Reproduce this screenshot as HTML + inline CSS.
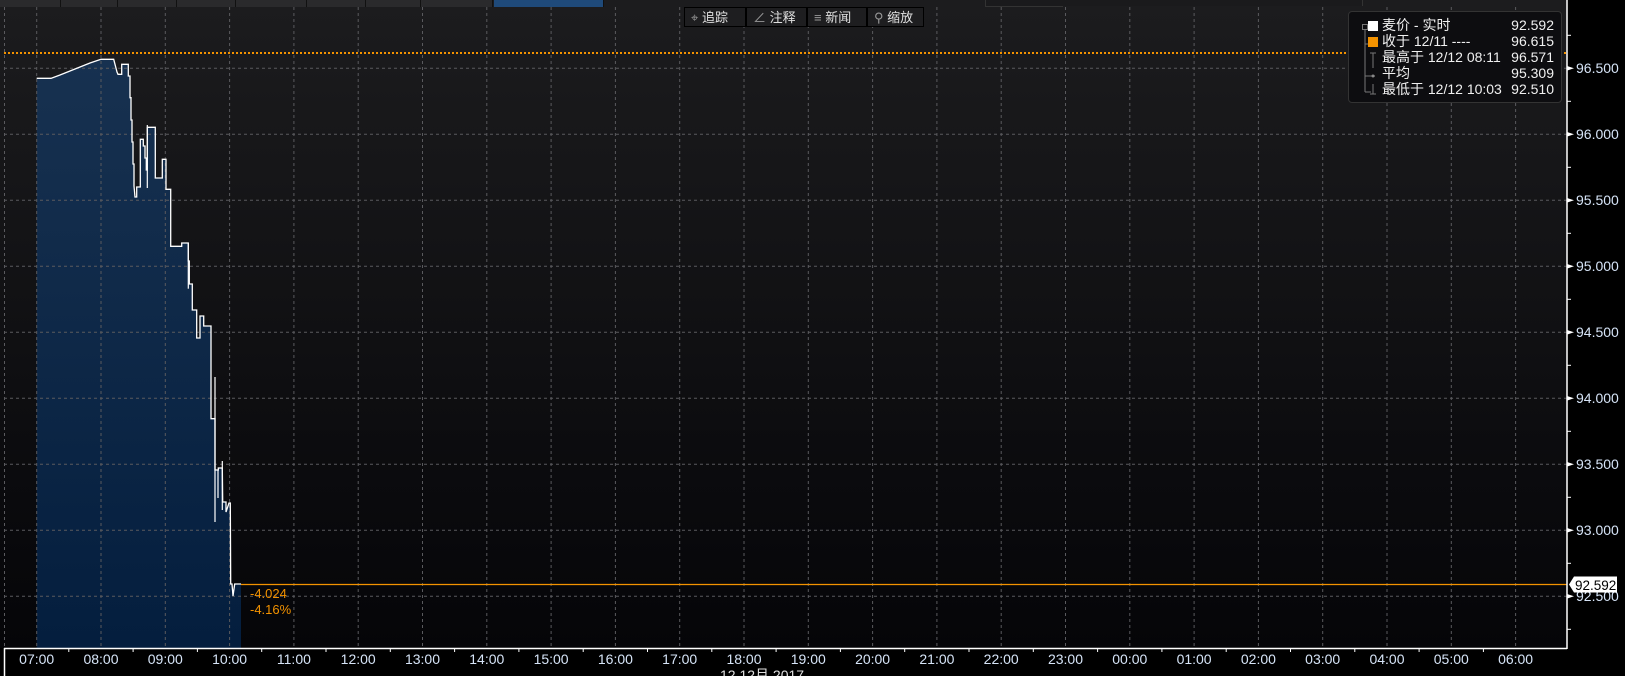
<!DOCTYPE html>
<html><head><meta charset="utf-8"><style>
html,body{margin:0;padding:0;background:#000;}
body{width:1625px;height:676px;overflow:hidden;position:relative;font-family:"Liberation Sans","Noto Sans CJK SC",sans-serif;}
svg{position:absolute;left:0;top:0;}
.tb{position:absolute;top:7px;height:20px;background:#1e1e20;border:1px solid #000;color:#e0e0e0;font-size:13px;line-height:20px;box-sizing:border-box;}
.tab{position:absolute;top:0;height:7px;background:#2a2a2c;border-right:1px solid #111;}
.lg{position:absolute;left:1348px;top:11px;width:214px;height:92px;background:#0d0d10;border:1px solid #333;border-radius:4px;box-sizing:border-box;color:#f0f0f0;font-size:14px;}
.row{position:absolute;left:22px;right:7px;height:16px;line-height:16px;}
.row span.v{position:absolute;right:0;}
</style></head><body>
<svg width="1625" height="676" xmlns="http://www.w3.org/2000/svg" font-family="Liberation Sans, sans-serif">
<defs>
<linearGradient id="bg" x1="0" y1="0" x2="0" y2="1"><stop offset="0" stop-color="#1c1c1e"/><stop offset="1" stop-color="#050508"/></linearGradient>
<linearGradient id="fl" x1="0" y1="0" x2="0" y2="1"><stop offset="0" stop-color="#173150"/><stop offset="1" stop-color="#041e3e"/></linearGradient>
</defs>
<rect x="0" y="0" width="1567" height="648" fill="url(#bg)"/>
<rect x="1567" y="0" width="58" height="676" fill="#000"/>
<rect x="0" y="648" width="1567" height="28" fill="#000"/>
<polygon fill="url(#fl)" points="36.7,648 36.7,78.3 51,78.3 60,75 70,71 80,67 90,63 101,59.3 113.7,59.3 117,72 118,74.3 121.7,74.3 121.7,64.3 128.3,64.3 128.3,76 130,76 130,97.7 131,97.7 131,120 132,120 132,142 133,142 133,164 134,164 134,186 135,197 136.7,197 136.7,187 140.3,187 140.3,139.3 143.3,139.3 143.3,146 145,146 145,158 146.3,158 146.3,170 147.3,170 147.3,127.3 155.3,127.3 155.3,178 162.3,178 162.3,159.3 166,159.3 166,189.3 170.7,189.3 170.7,246.3 181.7,246.3 181.7,243 188.3,243 188.3,261 189.3,261 189.3,284 192.3,284 192.3,310 196.7,310 196.7,338 200,338 200,316 203.7,316 203.7,326 211,326 211,418.7 215,418.7 215,470 218.3,470 218.3,468 222.3,468 222.7,502 226,502 226,512 229,503 230.3,503 230.7,584 232,584 233,596 234.7,584 241,584 241,648"/>
<g stroke="#5a5a5e" stroke-width="1" stroke-dasharray="3,3" fill="none">
<line x1="4.5" y1="7" x2="4.5" y2="648"/>
<line x1="36.7" y1="7" x2="36.7" y2="648"/><line x1="101" y1="7" x2="101" y2="648"/><line x1="165.3" y1="7" x2="165.3" y2="648"/><line x1="229.6" y1="7" x2="229.6" y2="648"/><line x1="293.9" y1="7" x2="293.9" y2="648"/><line x1="358.2" y1="7" x2="358.2" y2="648"/><line x1="422.5" y1="7" x2="422.5" y2="648"/><line x1="486.8" y1="7" x2="486.8" y2="648"/><line x1="551.1" y1="7" x2="551.1" y2="648"/><line x1="615.4" y1="7" x2="615.4" y2="648"/><line x1="679.7" y1="7" x2="679.7" y2="648"/><line x1="744" y1="7" x2="744" y2="648"/><line x1="808.3" y1="7" x2="808.3" y2="648"/><line x1="872.6" y1="7" x2="872.6" y2="648"/><line x1="936.9" y1="7" x2="936.9" y2="648"/><line x1="1001.2" y1="7" x2="1001.2" y2="648"/><line x1="1065.5" y1="7" x2="1065.5" y2="648"/><line x1="1129.8" y1="7" x2="1129.8" y2="648"/><line x1="1194.1" y1="7" x2="1194.1" y2="648"/><line x1="1258.4" y1="7" x2="1258.4" y2="648"/><line x1="1322.7" y1="7" x2="1322.7" y2="648"/><line x1="1387" y1="7" x2="1387" y2="648"/><line x1="1451.3" y1="7" x2="1451.3" y2="648"/><line x1="1515.6" y1="7" x2="1515.6" y2="648"/>
<line x1="4" y1="68.3" x2="1567" y2="68.3"/><line x1="4" y1="134.3" x2="1567" y2="134.3"/><line x1="4" y1="200.3" x2="1567" y2="200.3"/><line x1="4" y1="266.3" x2="1567" y2="266.3"/><line x1="4" y1="332.3" x2="1567" y2="332.3"/><line x1="4" y1="398.3" x2="1567" y2="398.3"/><line x1="4" y1="464.3" x2="1567" y2="464.3"/><line x1="4" y1="530.3" x2="1567" y2="530.3"/><line x1="4" y1="596.3" x2="1567" y2="596.3"/>
</g>
<line x1="4" y1="53" x2="1567" y2="53" stroke="#f39200" stroke-width="2" stroke-dasharray="2,2"/>
<line x1="241" y1="584.5" x2="1567" y2="584.5" stroke="#f39200" stroke-width="1.3"/>
<polyline fill="none" stroke="#fff" stroke-width="1.3" points="36.7,78.3 51,78.3 60,75 70,71 80,67 90,63 101,59.3 113.7,59.3 117,72 118,74.3 121.7,74.3 121.7,64.3 128.3,64.3 128.3,76 130,76 130,97.7 131,97.7 131,120 132,120 132,142 133,142 133,164 134,164 134,186 135,197 136.7,197 136.7,187 140.3,187 140.3,139.3 143.3,139.3 143.3,146 145,146 145,158 146.3,158 146.3,170 147.3,170 147.3,127.3 155.3,127.3 155.3,178 162.3,178 162.3,159.3 166,159.3 166,189.3 170.7,189.3 170.7,246.3 181.7,246.3 181.7,243 188.3,243 188.3,261 189.3,261 189.3,284 192.3,284 192.3,310 196.7,310 196.7,338 200,338 200,316 203.7,316 203.7,326 211,326 211,418.7 215,418.7 215,470 218.3,470 218.3,468 222.3,468 222.7,502 226,502 226,512 229,503 230.3,503 230.7,584 232,584 233,596 234.7,584 241,584"/>
<g stroke="#fff" stroke-width="1.2">
<line x1="147.3" y1="125" x2="147.3" y2="188"/><line x1="188.3" y1="243" x2="188.3" y2="288.7"/><line x1="215" y1="377" x2="215" y2="522"/><line x1="222.3" y1="461" x2="222.3" y2="510"/><line x1="218" y1="470" x2="218" y2="498"/>
</g>
<text x="250" y="598" fill="#f39200" font-size="13">-4.024</text>
<text x="250" y="614" fill="#f39200" font-size="13">-4.16%</text>
<g stroke="#fff" stroke-width="1.5"><line x1="4" y1="648.5" x2="1567" y2="648.5"/><line x1="1567" y1="0" x2="1567" y2="649"/><line x1="4.5" y1="648" x2="4.5" y2="676"/></g>
<g stroke="#fff" stroke-width="1">
<line x1="68.8" y1="648" x2="68.8" y2="652"/><line x1="133.1" y1="648" x2="133.1" y2="652"/><line x1="197.4" y1="648" x2="197.4" y2="652"/><line x1="261.7" y1="648" x2="261.7" y2="652"/><line x1="326" y1="648" x2="326" y2="652"/><line x1="390.3" y1="648" x2="390.3" y2="652"/><line x1="454.6" y1="648" x2="454.6" y2="652"/><line x1="518.9" y1="648" x2="518.9" y2="652"/><line x1="583.2" y1="648" x2="583.2" y2="652"/><line x1="647.5" y1="648" x2="647.5" y2="652"/><line x1="711.8" y1="648" x2="711.8" y2="652"/><line x1="776.1" y1="648" x2="776.1" y2="652"/><line x1="840.4" y1="648" x2="840.4" y2="652"/><line x1="904.7" y1="648" x2="904.7" y2="652"/><line x1="969" y1="648" x2="969" y2="652"/><line x1="1033.3" y1="648" x2="1033.3" y2="652"/><line x1="1097.6" y1="648" x2="1097.6" y2="652"/><line x1="1161.9" y1="648" x2="1161.9" y2="652"/><line x1="1226.2" y1="648" x2="1226.2" y2="652"/><line x1="1290.5" y1="648" x2="1290.5" y2="652"/><line x1="1354.8" y1="648" x2="1354.8" y2="652"/><line x1="1419.1" y1="648" x2="1419.1" y2="652"/><line x1="1483.4" y1="648" x2="1483.4" y2="652"/>
<line x1="1567" y1="35.3" x2="1571" y2="35.3"/><line x1="1567" y1="101.3" x2="1571" y2="101.3"/><line x1="1567" y1="167.3" x2="1571" y2="167.3"/><line x1="1567" y1="233.3" x2="1571" y2="233.3"/><line x1="1567" y1="299.3" x2="1571" y2="299.3"/><line x1="1567" y1="365.3" x2="1571" y2="365.3"/><line x1="1567" y1="431.3" x2="1571" y2="431.3"/><line x1="1567" y1="497.3" x2="1571" y2="497.3"/><line x1="1567" y1="563.3" x2="1571" y2="563.3"/><line x1="1567" y1="629.3" x2="1571" y2="629.3"/>
</g>
<g fill="#fff">
<polygon points="1567,66 1574,68.3 1567,70.6"/><polygon points="1567,132 1574,134.3 1567,136.6"/><polygon points="1567,198 1574,200.3 1567,202.6"/><polygon points="1567,264 1574,266.3 1567,268.6"/><polygon points="1567,330 1574,332.3 1567,334.6"/><polygon points="1567,396 1574,398.3 1567,400.6"/><polygon points="1567,462 1574,464.3 1567,466.6"/><polygon points="1567,528 1574,530.3 1567,532.6"/><polygon points="1567,594 1574,596.3 1567,598.6"/>
</g>
<g fill="#d6e4f7" font-size="14">
<text x="1576" y="73">96.500</text><text x="1576" y="139">96.000</text><text x="1576" y="205">95.500</text><text x="1576" y="271">95.000</text><text x="1576" y="337">94.500</text><text x="1576" y="403">94.000</text><text x="1576" y="469">93.500</text><text x="1576" y="535">93.000</text><text x="1576" y="601">92.500</text>
</g>
<polygon points="1569,584.5 1574,576.5 1617,576.5 1617,592.5 1574,592.5" fill="#fff"/>
<text x="1575" y="590" fill="#000" font-size="13.5">92.592</text>
<g fill="#d6e4f7" font-size="14" text-anchor="middle">
<text x="36.7" y="664">07:00</text><text x="101" y="664">08:00</text><text x="165.3" y="664">09:00</text><text x="229.6" y="664">10:00</text><text x="293.9" y="664">11:00</text><text x="358.2" y="664">12:00</text><text x="422.5" y="664">13:00</text><text x="486.8" y="664">14:00</text><text x="551.1" y="664">15:00</text><text x="615.4" y="664">16:00</text><text x="679.7" y="664">17:00</text><text x="744" y="664">18:00</text><text x="808.3" y="664">19:00</text><text x="872.6" y="664">20:00</text><text x="936.9" y="664">21:00</text><text x="1001.2" y="664">22:00</text><text x="1065.5" y="664">23:00</text><text x="1129.8" y="664">00:00</text><text x="1194.1" y="664">01:00</text><text x="1258.4" y="664">02:00</text><text x="1322.7" y="664">03:00</text><text x="1387" y="664">04:00</text><text x="1451.3" y="664">05:00</text><text x="1515.6" y="664">06:00</text>
</g>
<text x="720" y="680" fill="#e0e0e0" font-size="14" font-family="Liberation Sans, Noto Sans CJK SC, sans-serif">12 12月 2017</text>
</svg>
<div class="tab" style="left:0;width:60px"></div><div class="tab" style="left:61px;width:56px"></div><div class="tab" style="left:118px;width:58px"></div><div class="tab" style="left:177px;width:58px"></div><div class="tab" style="left:236px;width:70px"></div><div class="tab" style="left:307px;width:58px"></div><div class="tab" style="left:366px;width:54px"></div><div class="tab" style="left:421px;width:71px"></div>
<div class="tab" style="left:494px;width:109px;background:#1f4a7a"></div>
<div class="tab" style="left:985px;width:76px;height:6px;background:#1a1a1c;border:1px solid #333;border-top:0"></div>
<div class="tab" style="left:1062px;width:300px;height:6px;background:#1a1a1c;border-right:1px solid #333"></div>
<div class="tb" style="left:684px;width:62px;padding-left:6px"><span style="color:#999">⌖</span> 追踪</div>
<div class="tb" style="left:746px;width:61px;padding-left:6px"><span style="color:#999">∠</span> 注释</div>
<div class="tb" style="left:807px;width:60px;padding-left:6px"><span style="color:#999">≡</span> 新闻</div>
<div class="tb" style="left:867px;width:57px;padding-left:6px"><span style="color:#999">⚲</span> 缩放</div>
<div class="lg">
<svg width="30" height="92" style="left:0;top:0"><g stroke="#777" fill="none" stroke-width="1"><rect x="13.5" y="12.5" width="5" height="5"/><line x1="16" y1="18" x2="16" y2="80"/><line x1="16" y1="80" x2="22" y2="80"/><line x1="16" y1="32" x2="22" y2="32"/><line x1="16" y1="64" x2="26" y2="64"/><line x1="24" y1="41" x2="24" y2="56"/><line x1="21" y1="41" x2="27" y2="41"/><line x1="24" y1="72" x2="24" y2="82"/><line x1="21" y1="82" x2="27" y2="82"/></g><circle cx="24" cy="64" r="1.5" fill="#888"/><rect x="19" y="9" width="10" height="10" fill="#fff"/><rect x="19" y="25" width="10" height="10" fill="#f39200"/></svg>
<div class="row" style="top:5px;left:33px">麦价 - 实时<span class="v">92.592</span></div>
<div class="row" style="top:21px;left:33px">收于 12/11 ----<span class="v">96.615</span></div>
<div class="row" style="top:37px;left:33px">最高于 12/12 08:11<span class="v">96.571</span></div>
<div class="row" style="top:53px;left:33px">平均<span class="v">95.309</span></div>
<div class="row" style="top:69px;left:33px">最低于 12/12 10:03<span class="v">92.510</span></div>
</div>
</body></html>
